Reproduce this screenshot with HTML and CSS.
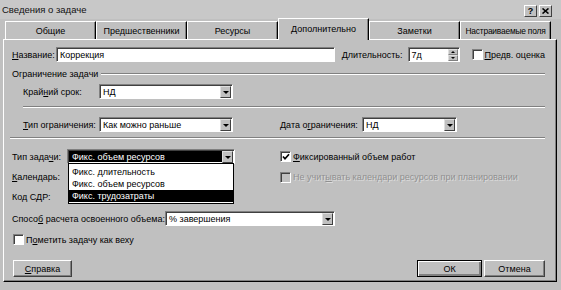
FILE: index.html
```html
<html>

<head>
    <link rel="stylesheet" href="styles.css">
</head>

<body>
    <div class="dialog">
        <div class="titlebar">
            <span class="title">Сведения о задаче</span>
            <div class="tb-buttons">
                <span class="tb-btn">?</span>
                <span class="tb-btn">
                    <svg width="7" height="6" viewBox="0 0 7 6"><path d="M0.5 0.5 L6.5 5.5 M6.5 0.5 L0.5 5.5" stroke="#000" stroke-width="1.6"/></svg>
                </span>
            </div>
        </div>

        <div class="tabs">
            <div class="tab">Общие</div>
            <div class="tab">Предшественники</div>
            <div class="tab">Ресурсы</div>
            <div class="tab active">Дополнительно</div>
            <div class="tab">Заметки</div>
            <div class="tab tab-tight">Настраиваемые поля</div>
        </div>

        <div class="panel">
            <div class="row row-name">
                <span class="lbl lbl-name"><u>Н</u>азвание:</span>
                <div class="field name-field">Коррекция</div>
                <span class="lbl lbl-dur"><u>Д</u>лительность:</span>
                <div class="field spin">
                    <span class="spin-text">7д</span>
                    <span class="spin-btns">
                        <span class="spin-btn"><i class="tri-up"></i></span>
                        <span class="spin-btn"><i class="tri-down"></i></span>
                    </span>
                </div>
                <span class="check est-check"></span>
                <span class="check-lbl"><u>П</u>редв. оценка</span>
            </div>

            <div class="group-title">
                <span>Ограничение задачи</span>
                <span class="group-line"></span>
            </div>

            <div class="row row-deadline">
                <span class="lbl lbl-indent">Край<u>н</u>ий срок:</span>
                <div class="field select sel-deadline">
                    <span class="sel-text">НД</span>
                    <span class="arrow"><i class="tri-down"></i></span>
                </div>
            </div>

            <div class="sep sep-indent"></div>

            <div class="row row-constraint">
                <span class="lbl lbl-indent"><u>Т</u>ип ограничения:</span>
                <div class="field select sel-deadline">
                    <span class="sel-text">Как можно раньше</span>
                    <span class="arrow"><i class="tri-down"></i></span>
                </div>
                <span class="lbl lbl-date">Дата о<u>г</u>раничения:</span>
                <div class="field select sel-date">
                    <span class="sel-text">НД</span>
                    <span class="arrow"><i class="tri-down"></i></span>
                </div>
            </div>

            <div class="sep"></div>

            <div class="row row-type">
                <div class="left-col">
                    <span class="lbl lbl-type">Тип зада<u>ч</u>и:</span>
                    <div class="field select sel-type active-sel">
                        <span class="sel-text">Фикс. объем ресурсов</span>
                        <span class="arrow"><i class="tri-down"></i></span>
                        <div class="dropdown">
                            <div class="dd-item">Фикс. длительность</div>
                            <div class="dd-item">Фикс. объем ресурсов</div>
                            <div class="dd-item current">Фикс. трудозатраты</div>
                        </div>
                    </div>
                </div>
                <span class="check checked">
                    <svg width="8" height="8" viewBox="0 0 8 8"><path d="M1 3.5 L3 5.8 L7 1.2" fill="none" stroke="#000" stroke-width="1.7"/></svg>
                </span>
                <span class="check-lbl"><u>Ф</u>иксированный объем работ</span>
            </div>

            <div class="row row-calendar">
                <div class="left-col">
                    <span class="lbl"><u>К</u>алендарь:</span>
                </div>
                <span class="check disabled"></span>
                <span class="check-lbl disabled-lbl">Не учит<u>ы</u>вать календари ресурсов при планировании</span>
            </div>

            <div class="row row-wbs">
                <span class="lbl">Код С<u>Д</u>Р:</span>
            </div>

            <div class="row row-earned">
                <span class="lbl lbl-earned">Спосо<u>б</u> расчета освоенного объема:</span>
                <div class="field select sel-earned">
                    <span class="sel-text">% завершения</span>
                    <span class="arrow"><i class="tri-down"></i></span>
                </div>
            </div>

            <div class="row row-milestone">
                <span class="check"></span>
                <span class="check-lbl">П<u>о</u>метить задачу как веху</span>
            </div>

            <div class="row row-buttons">
                <span class="btn btn-help"><span><u>С</u>правка</span></span>
                <span class="spacer"></span>
                <span class="btn btn-ok">ОК</span>
                <span class="btn btn-cancel">Отмена</span>
            </div>
        </div>
    </div>
</body>

</html>
```

FILE: styles.css
```css
body {
    margin: 0;
    background: #c0c0c0;
    font-family: "Liberation Sans", Arial, sans-serif;
    font-size: 9px;
    color: #000;
}

.dialog {
    width: 561px;
    height: 290px;
    background: #c0c0c0;
    display: flex;
    flex-direction: column;
}

/* title bar */
.titlebar {
    height: 19px;
    display: flex;
    align-items: center;
    justify-content: space-between;
    padding: 0 9px 0 2px;
    background: #c8c8c8;
}
.title {
    font-size: 9.5px;
    color: #111;
}
.tb-buttons {
    display: flex;
    gap: 2px;
    margin-top: 2px;
}
.tb-btn {
    width: 11px;
    height: 10px;
    border: 1px solid;
    border-color: #fff #404040 #404040 #fff;
    background: #c0c0c0;
    font-weight: bold;
    font-size: 9px;
    display: flex;
    align-items: center;
    justify-content: center;
}

/* tabs */
.tabs {
    display: flex;
    align-items: flex-end;
    height: 20px;
    padding-left: 5px;
    position: relative;
    z-index: 1;
}
.tab {
    width: 91px;
    height: 18px;
    box-sizing: border-box;
    border-top: 1px solid #fff;
    border-left: 1px solid #fff;
    border-right: 1px solid #000;
    box-shadow: inset -1px 0 #808080;
    text-align: center;
    line-height: 18px;
    white-space: nowrap;
    background: #c0c0c0;
}
.tab-tight {
    font-size: 8.4px;
    letter-spacing: -0.2px;
}
.tab.active {
    height: 22px;
    margin-bottom: -1px;
    line-height: 20px;
}

/* main panel */
.panel {
    margin-left: 3px;
    width: 554px;
    height: 243px;
    box-sizing: border-box;
    border-left: 1px solid #fff;
    border-top: 1px solid #fff;
    border-right: 1px solid #000;
    border-bottom: 1px solid #000;
    box-shadow: inset -1px -1px #808080;
    padding: 7px 11px 0 8px;
    display: flex;
    flex-direction: column;
}

.row {
    display: flex;
    align-items: center;
}
.lbl {
    white-space: nowrap;
}
.left-col {
    width: 268px;
    display: flex;
    align-items: center;
    height: 100%;
}

.row-name { height: 15px; }
.lbl-name { width: 44px; }
.name-field { width: 279px; }
.lbl-dur { width: 66px; margin-left: 7px; }

.group-title {
    display: flex;
    align-items: center;
    height: 12px;
    margin-top: 6px;
}
.group-line {
    flex: 1;
    border-top: 1px solid #808080;
    border-bottom: 1px solid #fff;
    margin-left: 3px;
}

.sep {
    border-top: 1px solid #808080;
    border-bottom: 1px solid #fff;
    margin-top: 5px;
    margin-left: -2px;
}
.sep-indent {
    margin-top: 7px;
    margin-left: 11px;
}

.row-deadline { height: 15px; margin-top: 4px; }
.row-constraint { height: 15px; margin-top: 9px; }
.lbl-indent { width: 76px; margin-left: 11px; }
.lbl-date { width: 82px; margin-left: 47px; }
.sel-deadline { width: 134px; }
.sel-date { width: 95px; }

.row-type { height: 15px; margin-top: 10px; }
.row-calendar { height: 14px; margin-top: 6px; }
.row-wbs { height: 14px; margin-top: 6px; }
.row-earned { height: 15px; margin-top: 7px; }
.row-milestone { height: 13px; margin-top: 7px; }
.row-buttons { height: 17px; margin-top: 14px; }

.lbl-type { width: 55px; }
.sel-type { width: 168px; }
.lbl-earned { width: 153px; }
.sel-earned { width: 170px; }

/* sunken fields */
.field {
    height: 100%;
    box-sizing: border-box;
    background: #fff;
    border: 1px solid;
    border-color: #808080 #fff #fff #808080;
    box-shadow: inset 1px 1px #404040;
    padding: 0 3px;
    display: flex;
    align-items: center;
    white-space: nowrap;
}

.select {
    position: relative;
    padding-right: 1px;
}
.sel-text {
    flex: 1;
    height: 100%;
    display: flex;
    align-items: center;
}
.arrow {
    width: 9px;
    height: 10px;
    margin-top: 1px;
    background: #c0c0c0;
    border: 1px solid;
    border-color: #dfdfdf #404040 #404040 #dfdfdf;
    display: flex;
    align-items: center;
    justify-content: center;
}
.tri-down,
.tri-up {
    width: 0;
    height: 0;
    border-left: 3px solid transparent;
    border-right: 3px solid transparent;
}
.tri-down {
    border-top: 3px solid #000;
}
.tri-up {
    border-bottom: 3px solid #000;
}

.active-sel {
    padding-left: 1px;
}
.active-sel .sel-text {
    background: #000;
    color: #fff;
    padding-left: 3px;
    margin: 1px 0;
    height: auto;
    align-self: stretch;
}

.dropdown {
    position: absolute;
    top: 100%;
    left: 0;
    width: 100%;
    box-sizing: border-box;
    background: #fff;
    border: 1px solid #000;
    padding: 2px 0 1px;
}
.dd-item {
    height: 12px;
    line-height: 12px;
    padding-left: 3px;
}
.dd-item.current {
    background: #000;
    color: #fff;
}

/* spin box */
.spin {
    width: 52px;
    padding-right: 1px;
}
.spin-text {
    flex: 1;
}
.spin-btns {
    display: flex;
    flex-direction: column;
    height: 12px;
}
.spin-btn {
    width: 10px;
    flex: 1;
    box-sizing: border-box;
    background: #c0c0c0;
    border: 1px solid;
    border-color: #dfdfdf #808080 #808080 #dfdfdf;
    display: flex;
    align-items: center;
    justify-content: center;
}
.spin-btn i {
    border-left-width: 2px;
    border-right-width: 2px;
}
.spin-btn .tri-up { border-bottom-width: 2px; }
.spin-btn .tri-down { border-top-width: 2px; }

/* check boxes */
.check {
    width: 11px;
    height: 11px;
    box-sizing: border-box;
    background: #fff;
    border: 1px solid;
    border-color: #808080 #fff #fff #808080;
    box-shadow: inset 1px 1px #404040;
    display: flex;
    align-items: center;
    justify-content: center;
    flex: none;
}
.check.disabled {
    background: #c0c0c0;
}
.check-lbl {
    margin-left: 2px;
    white-space: nowrap;
}
.disabled-lbl {
    color: #909090;
    text-shadow: 1px 1px #dcdcdc;
}
.est-check { margin-left: 12px; }
.row-milestone .check { margin-left: 1px; }

/* push buttons */
.btn {
    height: 17px;
    box-sizing: border-box;
    border: 1px solid;
    border-color: #fff #404040 #404040 #fff;
    box-shadow: inset -1px -1px #808080;
    display: flex;
    align-items: center;
    justify-content: center;
}
.btn-help { width: 59px; margin-left: 1px; }
.btn-ok {
    width: 65px;
    border-color: #000;
    box-shadow: inset 1px 1px #fff, inset -2px -2px #808080;
}
.btn-cancel {
    width: 61px;
    margin-left: 2px;
}
.spacer {
    flex: 1;
}
```
